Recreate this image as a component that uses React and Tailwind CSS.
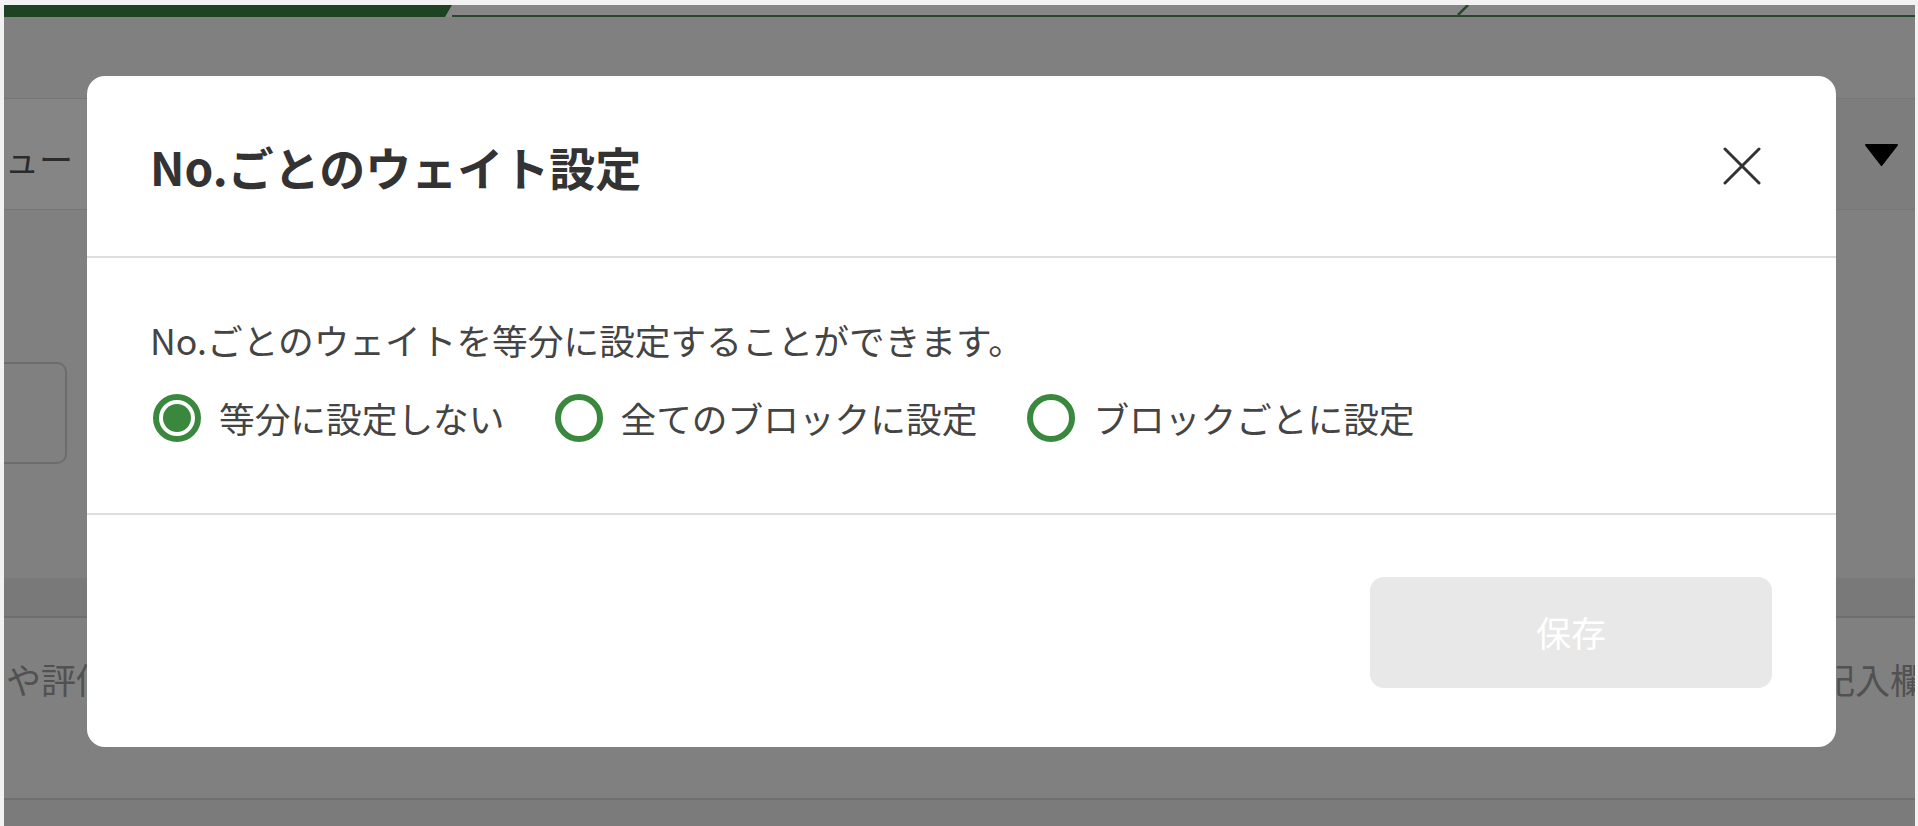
import React, { useState } from "react";

const options = [
  { id: "none", label: "等分に設定しない" },
  { id: "all", label: "全てのブロックに設定" },
  { id: "block", label: "ブロックごとに設定" },
];

function Radio({ checked }) {
  return (
    <span className="flex h-[48px] w-[48px] shrink-0 items-center justify-center rounded-full border-[6px] border-[#3a883e] bg-white">
      {checked && <span className="h-[28px] w-[28px] rounded-full bg-[#3a883e]" />}
    </span>
  );
}

export default function App() {
  const [selected, setSelected] = useState("none");

  return (
    <div className="relative h-[826px] w-full overflow-hidden bg-[#f2f2f2] pl-[4px] pr-[3px] pt-[5px] font-['Noto_Sans_CJK_JP',sans-serif]">
      {/* page behind the overlay */}
      <div className="flex h-[821px] flex-col bg-[#808080]">
        {/* progress */}
        <div className="flex h-[12px] bg-[#878787]">
          <div className="h-full w-[448px] bg-[#1d4322] [clip-path:polygon(0_0,100%_0,calc(100%-7px)_100%,0_100%)]" />
          <div className="flex flex-1 items-start border-b-2 border-[#27482c]">
            <svg width="12" height="10" viewBox="0 0 12 10" className="ml-[1005px]">
              <line x1="1" y1="10" x2="11" y2="0" stroke="#27482c" strokeWidth="2.5" />
            </svg>
          </div>
        </div>
        <div className="h-[81px]" />

        {/* menu bar */}
        <div className="flex h-[112px] items-center justify-between border-y border-[#767676] bg-[#7d7d7d]">
          <div className="flex h-full w-[300px] items-center bg-[#858585] pl-[1px] pt-[10px] text-[34px] leading-none text-[#2b2b2b]">
            ュー
          </div>
          <svg width="33" height="22" viewBox="0 0 33 22" className="mr-[17px] mt-[2px]">
            <path d="M1 1 H32 L16.5 21 Z" fill="#000" stroke="#000" strokeLinejoin="round" strokeWidth="2" />
          </svg>
        </div>

        {/* input area */}
        <div className="h-[368px]">
          <div className="mt-[152px] h-[102px] w-[63px] rounded-r-[10px] border-y-2 border-r-2 border-[#6c6c6c]" />
        </div>

        <div className="h-[40px] border-b-2 border-[#6e6e6e] bg-[#797979]" />

        <div className="flex h-[182px] items-start justify-between overflow-hidden border-b-2 border-[#6f6f6f] pl-[2px] pt-[35px] text-[35px] leading-[52px] text-[#515151]">
          <span>や評価</span>
          <span className="-mr-[10px]">記入欄</span>
        </div>
        <div className="flex-1 bg-[#7b7b7b]" />
      </div>

      {/* dialog */}
      <div className="absolute left-[87px] top-[76px] flex h-[671px] w-[1749px] flex-col rounded-[18px] bg-white">
        <div className="flex h-[182px] shrink-0 items-center justify-between border-b-2 border-[#dedede] pl-[63px] pr-[75px]">
          <h2 className="text-[46px] font-bold leading-none text-[#333333]">No.ごとのウェイト設定</h2>
          <button type="button" className="flex h-[38px] w-[38px] items-center justify-center">
            <svg width="38" height="38" viewBox="0 0 38 38">
              <path d="M2 2 L36 36 M36 2 L2 36" stroke="#333333" strokeWidth="3" strokeLinecap="round" />
            </svg>
          </button>
        </div>

        <div className="h-[257px] shrink-0 border-b-2 border-[#dedede] pl-[63px] pt-[56px] text-[35.7px] leading-[52px] text-[#444444]">
          <p>No.ごとのウェイトを等分に設定することができます。</p>
          <div className="mt-[27px] flex items-center pl-[3px]">
            {options.map((o) => (
              <label
                key={o.id}
                onClick={() => setSelected(o.id)}
                className="mr-[50px] flex cursor-pointer items-center gap-[18px]"
              >
                <Radio checked={selected === o.id} />
                <span className="leading-[50px]">{o.label}</span>
              </label>
            ))}
          </div>
        </div>

        <div className="flex justify-end pr-[64px] pt-[62px]">
          <button
            type="button"
            disabled
            className="h-[111px] w-[402px] rounded-[14px] bg-[#e8e8e8] text-[35px] text-white"
          >
            保存
          </button>
        </div>
      </div>
    </div>
  );
}
